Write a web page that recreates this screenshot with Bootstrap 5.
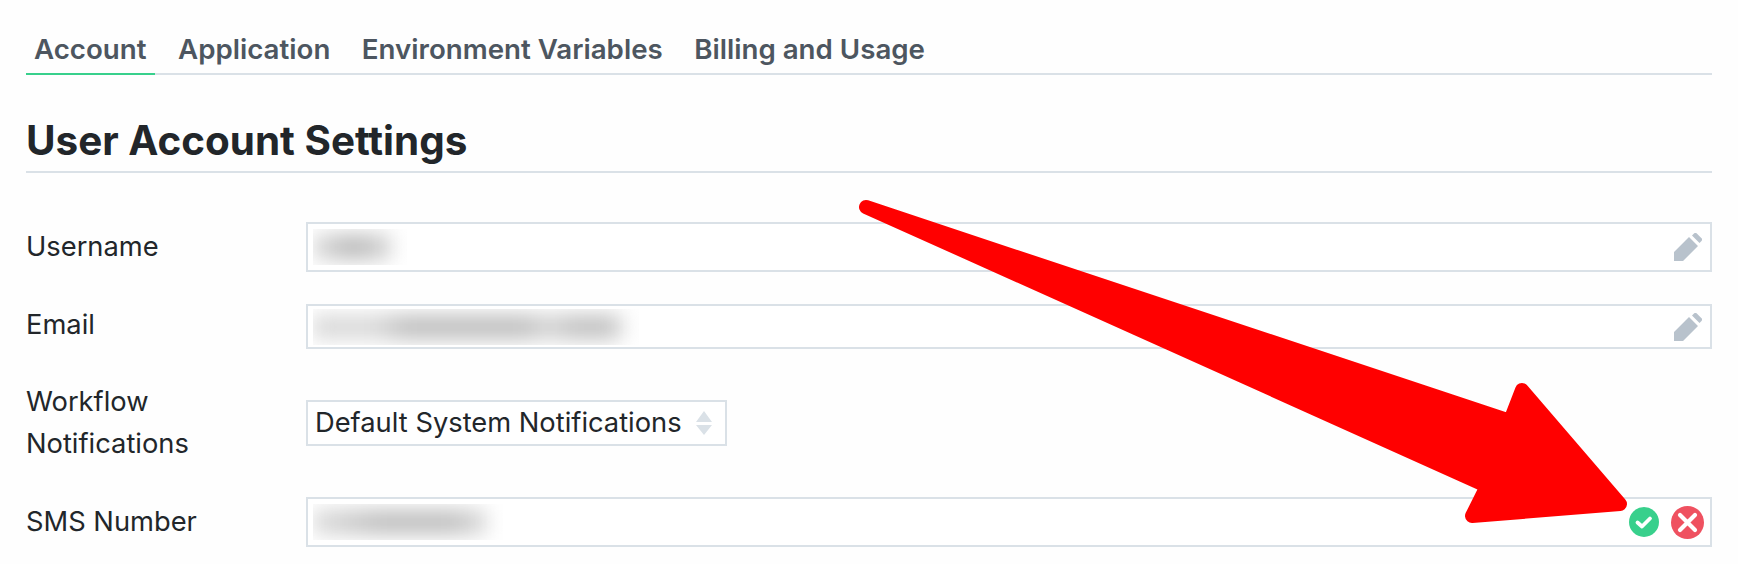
<!doctype html>
<html lang="en"><head><meta charset="utf-8"><title>User Account Settings</title>
<link href="https://cdn.jsdelivr.net/npm/bootstrap@5.3.0/dist/css/bootstrap.min.css" rel="stylesheet">
<style>
html,body{height:564px;overflow:hidden}
body{background:#fefefe;font-family:Inter,"Liberation Sans",sans-serif;color:#22262a;position:relative}
.shell{padding:25px 26px 0 26px}
.tabbar{border-bottom:2px solid #dae1e7;height:50px;gap:15.500px}
.tablink{font-size:27.700px;font-weight:600;color:#4d5660;padding:0 8px;height:50px;line-height:48px;text-decoration:none;white-space:nowrap}
.tablink.on{border-bottom:2px solid #38d08c}
.pagehead{font-size:40.400px;font-weight:700;color:#22262a;line-height:48px;margin:0;padding:42px 0 6px;border-bottom:2px solid #dae1e7}
.formwrap{margin-top:49px}
.frow{margin-bottom:32px}
.flabel{width:280px;flex:none;font-size:27.300px;line-height:42px;color:#22262a}
.flabel-up{padding-bottom:3px}
.fbox{flex:1;border:2px solid #dae1e7;background:#fff;padding:0 6px 0 5px}
.fbox-tall{height:50px}
.fbox-short{height:45px}
.blurclip{display:block;overflow:hidden;height:36px;padding:6px 16px 6px 0}
.blurbit{display:block;height:24px;background:#c6c6c6;filter:blur(10px)}
.bw-user{width:78px;background:linear-gradient(90deg,#ddd,#b4b4b4 50%,#d4d4d4)}
.bw-mail{width:310px;background:linear-gradient(90deg,#d8d8d8 0,#d8d8d8 20%,#bdbdbd 30%,#bdbdbd 68%,#d4d4d4 76%,#c0c0c0 84%,#c0c0c0 96%,#ddd)}
.bw-sms{width:174px;background:linear-gradient(90deg,#dcdcdc 0,#bdbdbd 38%,#bdbdbd 80%,#ddd)}
.pick{height:46px;border:2px solid #dae1e7;background:#fff;padding:0 12px 0 7px;font-size:27.300px;gap:13px}
.pen{width:28px;height:28px;margin-right:2px}
.okdot{width:30px;height:30px}
.nodot{width:33px;height:33px}
.dotgap{gap:12px}
.bigarrow{position:absolute;left:0;top:0;pointer-events:none}
</style></head><body>
<div class="shell">
<nav class="nav tabbar d-flex">
<a class="tablink on" href="#">Account</a><a class="tablink" href="#">Application</a><a class="tablink" href="#">Environment Variables</a><a class="tablink" href="#">Billing and Usage</a>
</nav>
<h1 class="pagehead">User Account Settings</h1>
<div class="formwrap">
<div class="d-flex align-items-center frow"><div class="flabel">Username</div>
<div class="fbox fbox-tall d-flex align-items-center justify-content-between"><span class="blurclip"><span class="blurbit bw-user"></span></span>
<svg class="pen" viewBox="0 0 28 28"><path fill="#b8c2cc" d="M0 28V19L15 4l9 9L9 28zM18 2.500 20 .5a2 2 0 0 1 2.800 0l4.700 4.700a2 2 0 0 1 0 2.800l-2 2z"/></svg></div></div>
<div class="d-flex align-items-center frow"><div class="flabel flabel-up">Email</div>
<div class="fbox fbox-short d-flex align-items-center justify-content-between"><span class="blurclip"><span class="blurbit bw-mail"></span></span>
<svg class="pen" viewBox="0 0 28 28"><path fill="#b8c2cc" d="M0 28V19L15 4l9 9L9 28zM18 2.500 20 .5a2 2 0 0 1 2.800 0l4.700 4.700a2 2 0 0 1 0 2.800l-2 2z"/></svg></div></div>
<div class="d-flex align-items-center frow"><div class="flabel">Workflow<br>Notifications</div>
<div class="pick d-inline-flex align-items-center"><span>Default System Notifications</span>
<svg width="18" height="24" viewBox="0 0 18 24"><path fill="#dae1e7" d="M9 0l8 11H1zM1 14h16L9 24z"/></svg></div></div>
<div class="d-flex align-items-center frow"><div class="flabel">SMS Number</div>
<div class="fbox fbox-tall d-flex align-items-center justify-content-between"><span class="blurclip"><span class="blurbit bw-sms"></span></span>
<span class="d-flex align-items-center dotgap">
<svg class="okdot" viewBox="0 0 30 30"><circle cx="15" cy="15" r="15" fill="#38d08c"/><path d="M8.500 15.500l4.500 4 8-8" fill="none" stroke="#fff" stroke-width="3.800" stroke-linecap="round" stroke-linejoin="round"/></svg>
<svg class="nodot" viewBox="0 0 33 33"><circle cx="16.500" cy="16.500" r="16.500" fill="#ef5160"/><path d="M9 9l15 15M24 9L9 24" fill="none" stroke="#fff" stroke-width="4.200" stroke-linecap="round"/></svg>
</span></div></div>
</div></div>
<svg class="bigarrow" width="1738" height="564" viewBox="0 0 1738 564"><path fill="#f00" stroke="#f00" stroke-width="14" stroke-linejoin="round" d="M866 207L1510 421L1522 390L1620 504L1472 516L1487 486Z"/></svg>
</body></html>
